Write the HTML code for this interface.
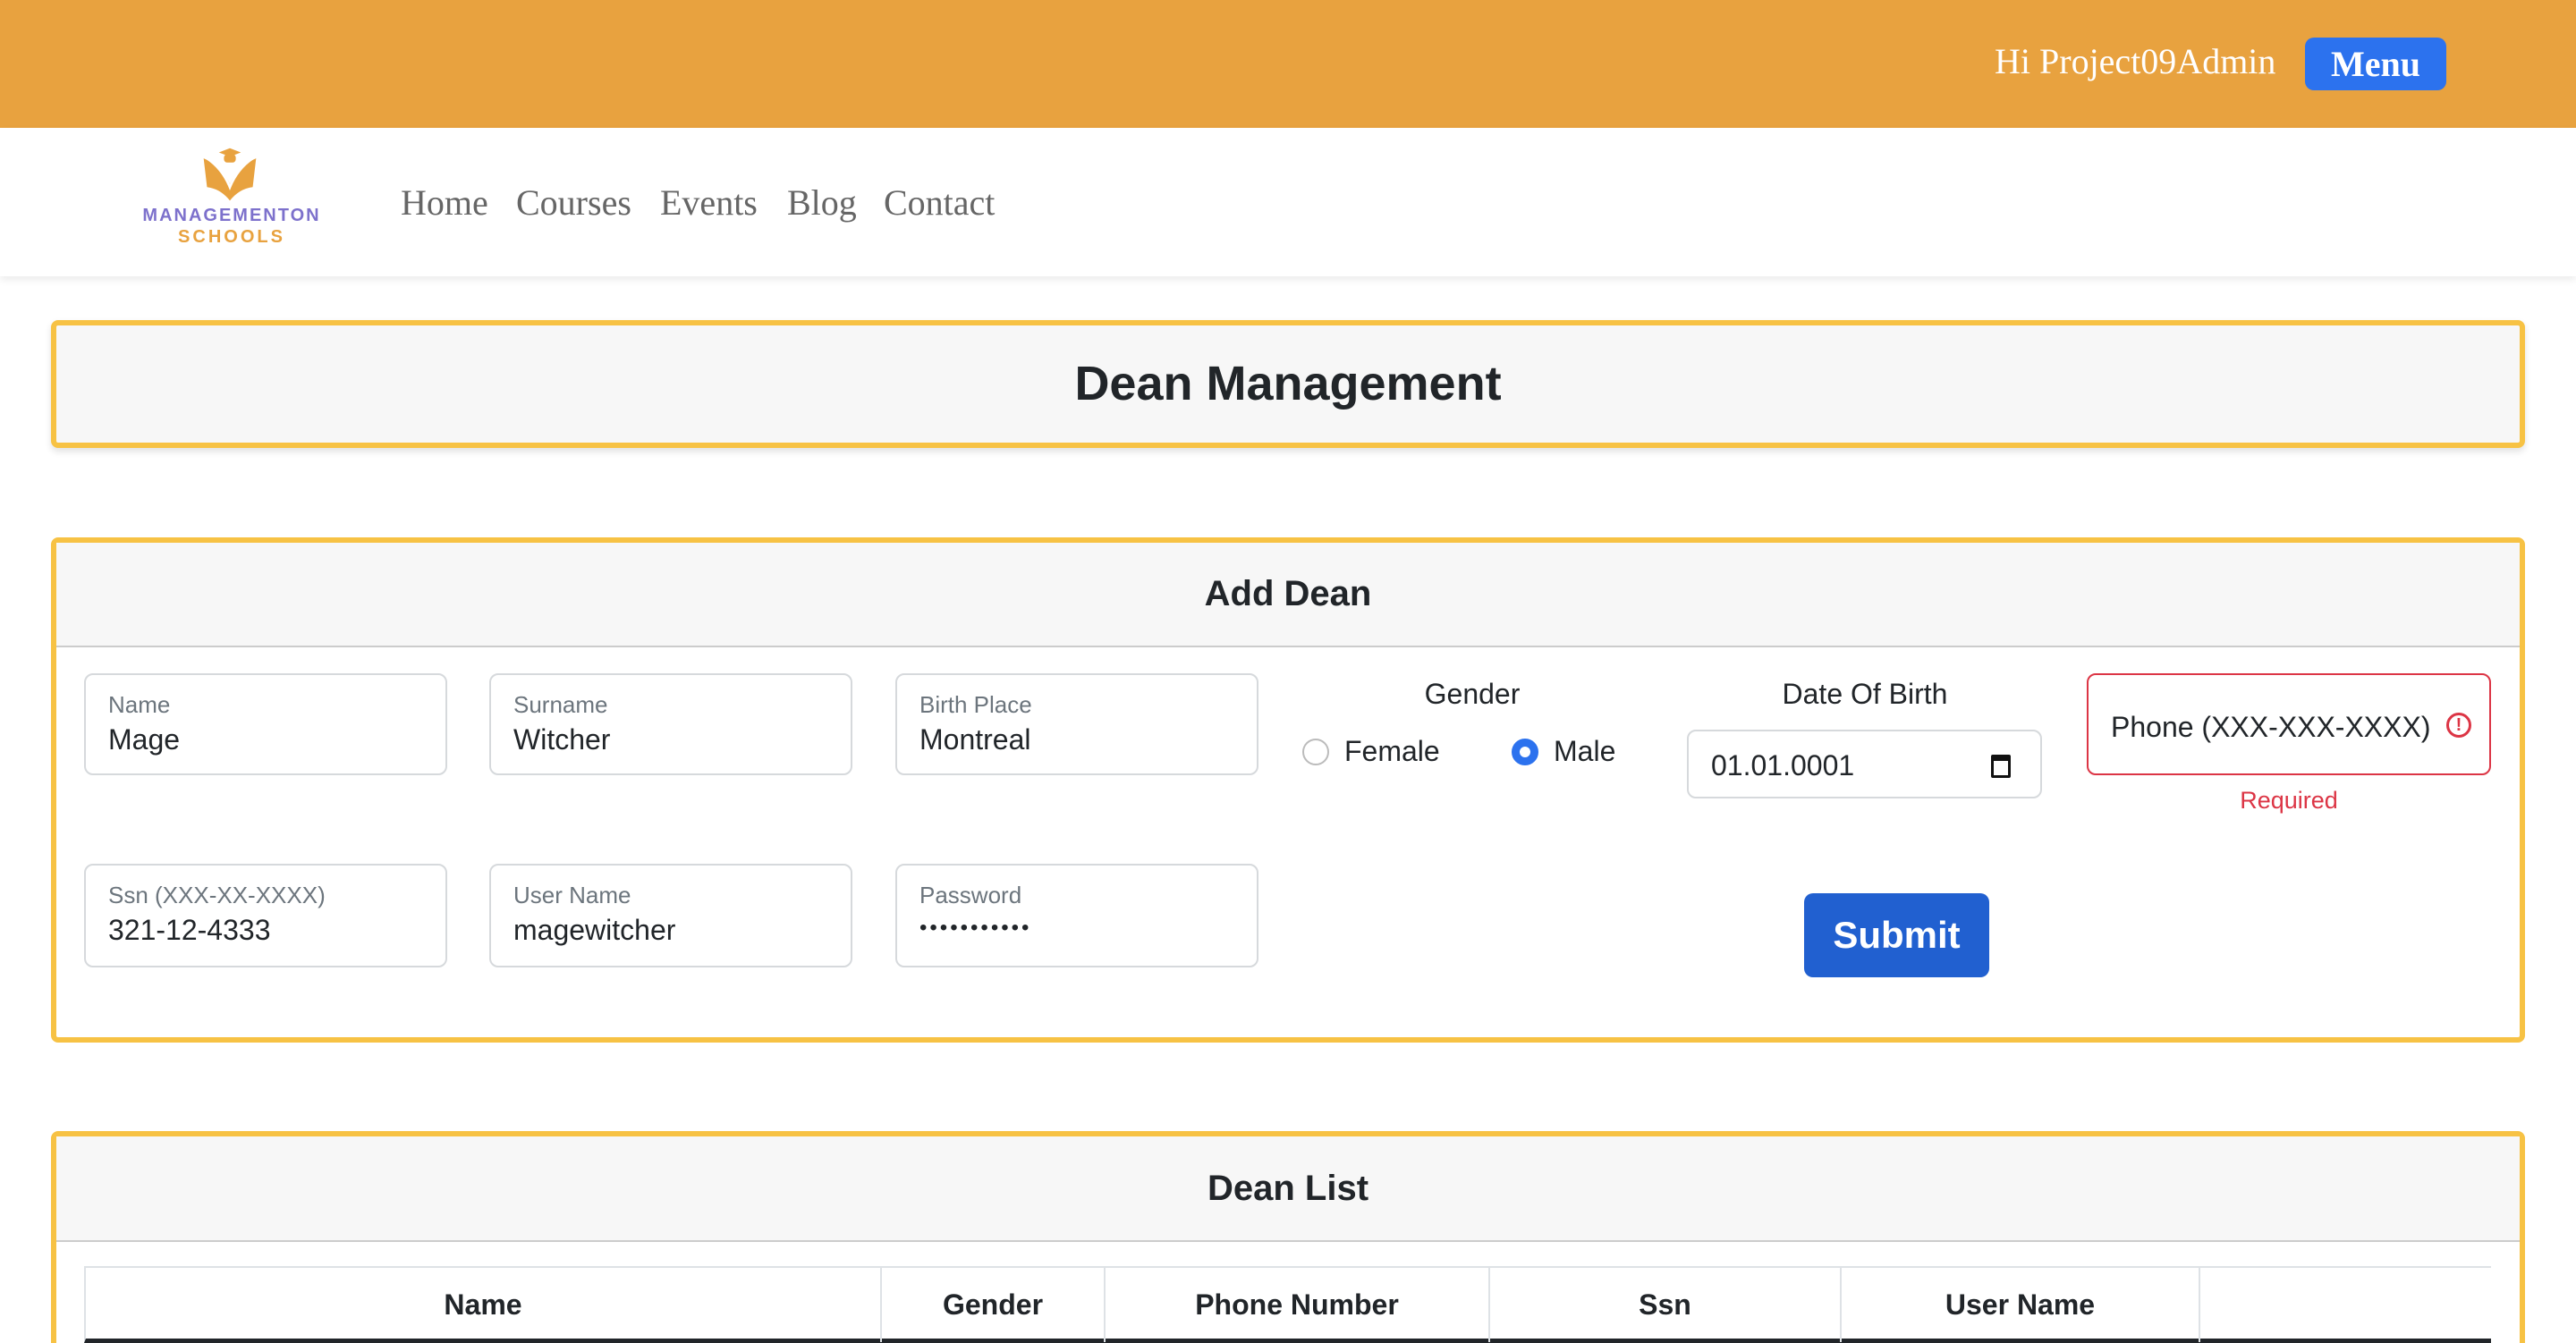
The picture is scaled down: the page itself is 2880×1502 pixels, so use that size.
<!DOCTYPE html>
<html><head><meta charset="utf-8"><style>
*{box-sizing:border-box;margin:0;padding:0}
html,body{width:2880px;height:1502px;overflow:hidden}
body{background:#fff;font-family:"Liberation Sans",sans-serif;color:#212529;position:relative}
.abs{position:absolute}
.top{left:0;top:0;width:2880px;height:143px;background:#E8A23F}
.nav{left:0;top:143px;width:2880px;height:166px;background:#fff;box-shadow:0 4px 8px rgba(0,0,0,.08)}
.serif{font-family:"Liberation Serif",serif}
.card{border:6px solid #F7C244;border-radius:8px;background:#fff}
.hdr{background:#f7f7f7;border-bottom:2px solid #ccc;text-align:center;font-weight:bold;font-size:40px}
.inp{border:2px solid #d6d9dc;border-radius:10px;background:#fff}
.lab{position:absolute;left:25px;top:18px;font-size:26px;color:#6c757d}
.val{position:absolute;left:25px;top:54px;font-size:32px;color:#212529}
.th{position:absolute;top:0;height:83px;border-right:2px solid #dee2e6;text-align:center;line-height:83px;font-weight:bold;font-size:32px}
.nl{position:absolute;top:203px;font-size:40px;color:#666;font-family:"Liberation Serif",serif}
</style></head><body>
<div class="abs top"></div>
<div class="abs serif" style="left:2230px;top:44px;font-size:40px;color:#fff;line-height:50px">Hi Project09Admin</div>
<div class="abs serif" style="left:2577px;top:42px;width:158px;height:59px;background:#2C72EE;border-radius:10px;color:#fff;font-weight:bold;font-size:40px;text-align:center;line-height:59px">Menu</div>
<div class="abs nav"></div>
<svg class="abs" style="left:222px;top:162px" width="70" height="68" viewBox="0 0 74 68">
<polygon points="37,2 50,7 37,12 24,7" fill="#E8A23F"/><rect x="30" y="9" width="14" height="10" rx="4" fill="#E8A23F"/>
<path d="M6 14 Q26 22 37 44 Q48 22 68 14 L64 48 Q48 50 37 64 Q26 50 10 48 Z" fill="#E8A23F"/>
<path d="M10 14 Q28 26 37 48 Q46 26 64 14" fill="none" stroke="#fff" stroke-width="3"/>
</svg>
<div class="abs" style="left:156px;top:230px;width:206px;text-align:center;font-size:20px;font-weight:bold;letter-spacing:2px;color:#7D71CC">MANAGEMENTON</div>
<div class="abs" style="left:156px;top:254px;width:206px;text-align:center;font-size:20px;font-weight:bold;letter-spacing:3px;color:#E8A23F">SCHOOLS</div>
<div class="nl" style="left:448px">Home</div>
<div class="nl" style="left:577px">Courses</div>
<div class="nl" style="left:738px">Events</div>
<div class="nl" style="left:880px">Blog</div>
<div class="nl" style="left:988px">Contact</div>

<div class="abs card" style="left:57px;top:358px;width:2766px;height:143px;background:#f7f7f7;box-shadow:0 4px 8px rgba(0,0,0,.12);text-align:center;font-weight:bold;font-size:54px;line-height:131px">Dean Management</div>

<div class="abs card" style="left:57px;top:601px;width:2766px;height:565px">
<div class="hdr" style="height:117px;line-height:115px">Add Dean</div>
</div>
<div class="abs inp" style="left:94px;top:753px;width:406px;height:114px"><span class="lab">Name</span><span class="val">Mage</span></div>
<div class="abs inp" style="left:547px;top:753px;width:406px;height:114px"><span class="lab">Surname</span><span class="val">Witcher</span></div>
<div class="abs inp" style="left:1001px;top:753px;width:406px;height:114px"><span class="lab">Birth Place</span><span class="val">Montreal</span></div>
<div class="abs" style="left:1446px;top:758px;width:400px;text-align:center;font-size:32px">Gender</div>
<div class="abs" style="left:1456px;top:826px;width:30px;height:30px;border:2px solid #bbb;border-radius:50%"></div>
<div class="abs" style="left:1503px;top:822px;font-size:32px">Female</div>
<div class="abs" style="left:1690px;top:826px;width:30px;height:30px;border:9px solid #2C72EE;border-radius:50%;background:#fff"></div>
<div class="abs" style="left:1737px;top:822px;font-size:32px">Male</div>
<div class="abs" style="left:1885px;top:758px;width:400px;text-align:center;font-size:32px">Date Of Birth</div>
<div class="abs inp" style="left:1886px;top:816px;width:397px;height:77px"><span style="position:absolute;left:25px;top:20px;font-size:32px">01.01.0001</span>
<div style="position:absolute;left:338px;top:26px;width:22px;height:26px;border:3px solid #111;border-top-width:7px;border-radius:2px"></div></div>
<div class="abs" style="left:2333px;top:753px;width:452px;height:114px;border:2px solid #dc3545;border-radius:10px">
<span style="position:absolute;left:25px;top:40px;font-size:32px">Phone (XXX-XXX-XXXX)</span>
<div style="position:absolute;left:400px;top:42px;width:28px;height:28px;border:3px solid #dc3545;border-radius:50%;color:#dc3545;font-size:20px;font-weight:bold;text-align:center;line-height:22px">!</div></div>
<div class="abs" style="left:2333px;top:880px;width:452px;text-align:center;font-size:27px;color:#dc3545">Required</div>

<div class="abs inp" style="left:94px;top:966px;width:406px;height:116px"><span class="lab">Ssn (XXX-XX-XXXX)</span><span class="val">321-12-4333</span></div>
<div class="abs inp" style="left:547px;top:966px;width:406px;height:116px"><span class="lab">User Name</span><span class="val">magewitcher</span></div>
<div class="abs inp" style="left:1001px;top:966px;width:406px;height:116px"><span class="lab">Password</span><span class="val" style="letter-spacing:3px;top:56px;font-size:24px">•••••••••••</span></div>
<div class="abs" style="left:2017px;top:999px;width:207px;height:94px;background:#2160D0;border-radius:10px;color:#fff;font-weight:bold;font-size:42px;text-align:center;line-height:94px">Submit</div>

<div class="abs card" style="left:57px;top:1265px;width:2766px;height:300px">
<div class="hdr" style="height:118px;line-height:116px">Dean List</div>
</div>
<div class="abs" style="left:94px;top:1416px;width:2691px;height:86px;border-top:2px solid #dee2e6;border-left:2px solid #dee2e6;border-bottom:5px solid #212529">
<div class="th" style="left:0;width:890px">Name</div>
<div class="th" style="left:890px;width:250px">Gender</div>
<div class="th" style="left:1140px;width:430px">Phone Number</div>
<div class="th" style="left:1570px;width:393px">Ssn</div>
<div class="th" style="left:1963px;width:401px">User Name</div>
</div>
</body></html>
